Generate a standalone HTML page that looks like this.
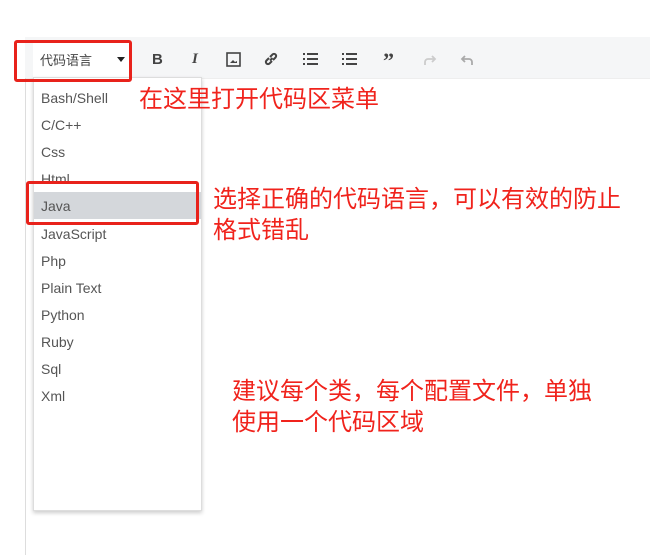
<!DOCTYPE html><html><head><meta charset="utf-8"><style>
body{margin:0;width:650px;height:555px;background:#fff;position:relative;overflow:hidden;font-family:"Liberation Sans","Noto Sans CJK SC",sans-serif}
.a{position:absolute}
.tb{left:25px;top:37px;width:625px;height:41px;background:#f5f6f7;border-bottom:1px solid #eee}
.sel{left:33px;top:40px;width:97px;height:38px;background:#fff}
.lb{left:25px;top:78px;width:1px;height:477px;background:#ddd}
.dd{left:33px;top:77px;width:167px;height:432px;background:#fff;border:1px solid #ddd;box-shadow:0 2px 4px rgba(0,0,0,.2)}
.it{position:absolute;left:7px;font-size:14px;color:#555;line-height:16px}
.hl{position:absolute;left:0;top:114px;width:167px;height:27px;background:#d4d7db}
.rb{border:3px solid #e8221b;border-radius:3px}
.red{color:#f0231c;font-size:24px;line-height:31px}
.ic{position:absolute;top:51px;color:#444;font-size:15px;font-weight:bold}
</style></head><body>
<div class="a tb"></div>
<div class="a sel"></div>
<div class="a" style="left:40px;top:50px;font-size:13px;color:#444">代码语言</div>
<div class="a" style="left:117px;top:57px;width:0;height:0;border-left:4px solid transparent;border-right:4px solid transparent;border-top:5px solid #222"></div>
<div class="ic" style="left:152px">B</div>
<div class="ic" style="left:192px;font-family:'Liberation Serif',serif;font-style:italic">I</div>
<svg class="a" style="left:226px;top:52px" width="15" height="15"><rect x="1" y="1" width="13" height="13" fill="none" stroke="#444" stroke-width="1.6"/><path d="M4 11 L7 8 L9 10 L11 9 L11 11Z" fill="#444"/></svg>
<svg class="a" style="left:263px;top:51px" width="16" height="16"><path d="M7 9.5 L9.5 7 M6 7 L3.5 9.5 a2 2 0 0 0 3 3 L9 10 M10 9 L12.5 6.5 a2 2 0 0 0 -3 -3 L7 6" fill="none" stroke="#444" stroke-width="2"/></svg>
<svg class="a" style="left:303px;top:52px" width="16" height="14"><g fill="#444"><rect x="0" y="1" width="2" height="2"/><rect x="0" y="6" width="2" height="2"/><rect x="0" y="11" width="2" height="2"/><rect x="4" y="1" width="11" height="2"/><rect x="4" y="6" width="11" height="2"/><rect x="4" y="11" width="11" height="2"/></g></svg>
<svg class="a" style="left:342px;top:52px" width="16" height="14"><g fill="#444"><rect x="0" y="1" width="2" height="2"/><rect x="0" y="6" width="2" height="2"/><rect x="0" y="11" width="2" height="2"/><rect x="4" y="1" width="11" height="2"/><rect x="4" y="6" width="11" height="2"/><rect x="4" y="11" width="11" height="2"/></g></svg>
<div class="ic" style="left:383px;top:48px;font-size:22px;font-family:'Liberation Serif',serif">”</div>
<svg class="a" style="left:422px;top:53px" width="16" height="13"><path d="M3 12 V9 a3 3 0 0 1 3 -3 H13 M10 3 L13 6 L10 9" fill="none" stroke="#ccc" stroke-width="1.8"/></svg>
<svg class="a" style="left:459px;top:53px" width="16" height="13"><path d="M13 12 V9 a3 3 0 0 0 -3 -3 H3 M6 3 L3 6 L6 9" fill="none" stroke="#aaa" stroke-width="1.8"/></svg>
<div class="a lb"></div>
<div class="a dd">
<div class="hl"></div>
<div class="it" style="top:12px">Bash/Shell</div>
<div class="it" style="top:39px">C/C++</div>
<div class="it" style="top:66px">Css</div>
<div class="it" style="top:93px">Html</div>
<div class="it" style="top:120px">Java</div>
<div class="it" style="top:148px">JavaScript</div>
<div class="it" style="top:175px">Php</div>
<div class="it" style="top:202px">Plain Text</div>
<div class="it" style="top:229px">Python</div>
<div class="it" style="top:256px">Ruby</div>
<div class="it" style="top:283px">Sql</div>
<div class="it" style="top:310px">Xml</div>
</div>
<div class="a rb" style="left:14px;top:40px;width:112px;height:36px"></div>
<div class="a rb" style="left:26px;top:181px;width:167px;height:38px"></div>
<div class="a red" style="left:139px;top:84px">在这里打开代码区菜单</div>
<div class="a red" style="left:213px;top:184px">选择正确的代码语言，可以有效的防止<br>格式错乱</div>
<div class="a red" style="left:232px;top:376px">建议每个类，每个配置文件，单独<br>使用一个代码区域</div>
</body></html>
